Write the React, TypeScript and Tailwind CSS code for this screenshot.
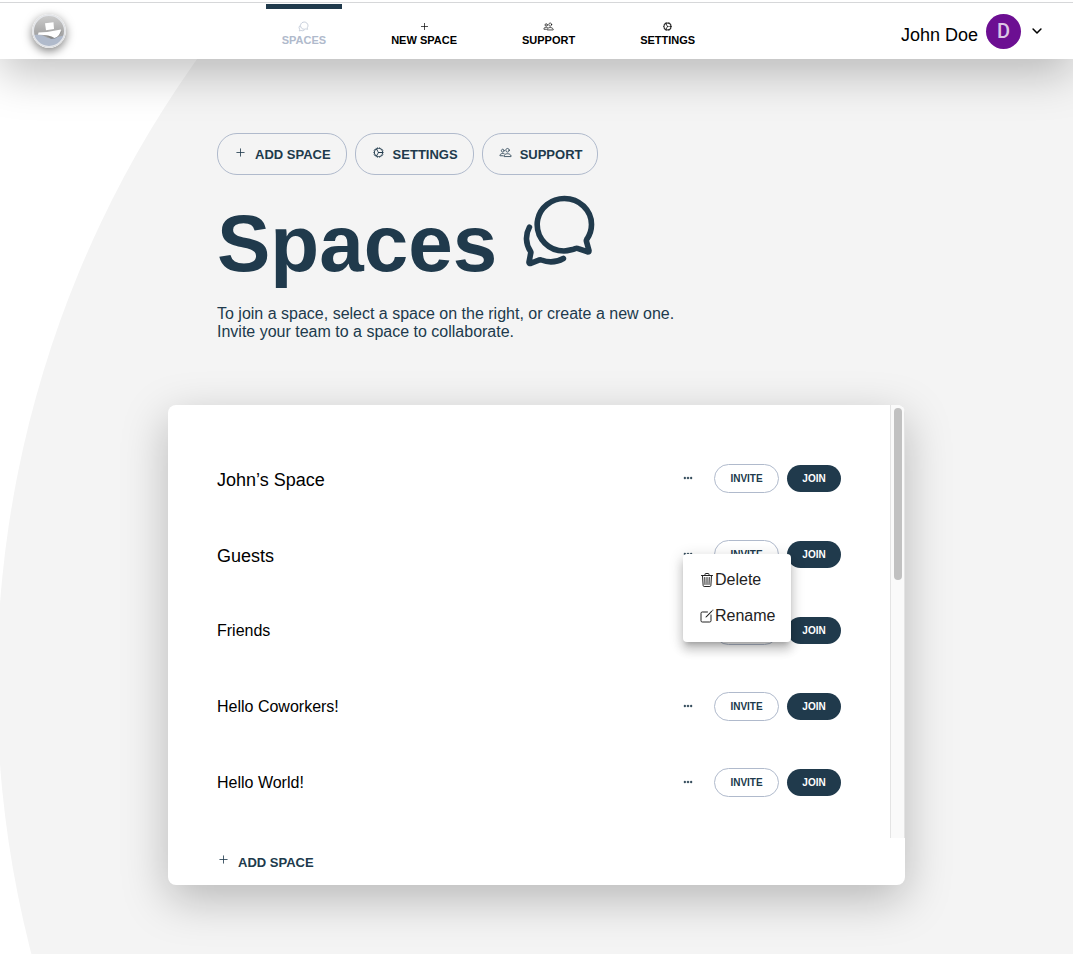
import type { ReactNode } from 'react';
import type { IconType } from 'react-icons';
import {
  IoAddOutline,
  IoChatbubblesOutline,
  IoChevronDownOutline,
  IoCogOutline,
  IoCreateOutline,
  IoEllipsisHorizontal,
  IoPeopleOutline,
  IoTrashOutline,
} from 'react-icons/io5';

const tabs: { label: string; icon: IconType; active?: boolean }[] = [
  { label: 'SPACES', icon: IoChatbubblesOutline, active: true },
  { label: 'NEW SPACE', icon: IoAddOutline },
  { label: 'SUPPORT', icon: IoPeopleOutline },
  { label: 'SETTINGS', icon: IoCogOutline },
];

const spaces: { name: string; large?: boolean; menuOpen?: boolean }[] = [
  { name: 'John’s Space', large: true },
  { name: 'Guests', large: true, menuOpen: true },
  { name: 'Friends' },
  { name: 'Hello Coworkers!' },
  { name: 'Hello World!' },
];

function Logo() {
  return (
    <a href="#home" aria-label="Home" className="block w-11">
      <svg
        viewBox="0 0 34 34"
        className="h-[34px] w-[34px] rounded-full shadow-[0_3px_10px_rgba(0,0,0,0.5)]"
        aria-hidden="true"
      >
        <defs>
          <linearGradient id="sky" x1="0" y1="0" x2="0" y2="1">
            <stop offset="0" stopColor="#d0d0d0" />
            <stop offset="0.6" stopColor="#a4a4a4" />
          </linearGradient>
          <clipPath id="disc">
            <circle cx="17" cy="17" r="16" />
          </clipPath>
        </defs>
        <circle cx="17" cy="17" r="17" fill="#e4e4e4" />
        <g clipPath="url(#disc)">
          <rect width="34" height="34" fill="url(#sky)" />
          <path d="M0 21.5Q6 19.5 11 21.5Q17 25.5 22 24Q28 22 34 21V34H0z" fill="#b0bacb" />
          <path d="M7 20.5Q13 20 19 25Q25 26 29.5 18V17L20 19z" fill="#666" opacity="0.45" />
        </g>
        <circle cx="17" cy="17" r="15.7" fill="none" stroke="#e4e6ea" strokeWidth="1.4" />
        <path d="M13 9.2L21.5 8.2L22 15L14 16.2z" fill="#fff" />
        <path d="M6.5 18.6Q17 18 29 15.4Q28.5 21.5 22.5 24Q17 20.5 6 20.7z" fill="#fff" />
      </svg>
    </a>
  );
}

function Header() {
  return (
    <header className="relative z-10 bg-white pt-[2px] shadow-[0_14px_46px_rgba(0,0,0,0.25)]">
      <div className="flex h-[57px] items-center justify-between border-t border-[#d6d7d9] pr-[29px] pl-8">
        <Logo />
        <nav className="flex gap-[33px] self-stretch pt-px">
          {tabs.map(({ label, icon: Icon, active }) => (
            <a
              key={label}
              href="#tab"
              aria-current={active ? 'page' : undefined}
              className={`flex flex-col items-center gap-[2px] border-t-[5px] px-4 pt-3 text-[11px] leading-3 font-bold ${
                active ? 'border-[#203a4c] text-[#b0bacc]' : 'border-transparent text-black'
              }`}
            >
              <Icon className="h-[11px] w-[11px]" />
              {label}
            </a>
          ))}
        </nav>
        <button type="button" className="flex items-center">
          <span className="pt-[7px] text-[18px] leading-5 text-black">John Doe</span>
          <span className="ml-2 flex h-[35px] w-[35px] items-center justify-center rounded-full bg-[#6c0f92] font-['Roboto',sans-serif] text-[20px] font-medium text-[#dcc6e6]">
            D
          </span>
          <IoChevronDownOutline className="ml-[9px] h-[14px] w-[14px] text-black [&_path]:stroke-[56px]" />
        </button>
      </div>
    </header>
  );
}

function PillButton({ icon: Icon, children }: { icon: IconType; children: ReactNode }) {
  return (
    <button
      type="button"
      className="flex h-[42px] items-center gap-2 rounded-[20px] border border-[#b0bacc] pt-[2px] pr-[15px] pl-4 text-[13px] font-bold"
    >
      <Icon className="mb-[6px] h-[13px] w-[13px]" />
      {children}
    </button>
  );
}

function SpaceMenu() {
  return (
    <ul
      role="menu"
      className="absolute top-1/2 left-0 z-10 rounded bg-white py-2 text-[16px] text-[#222] shadow-[0_5px_5px_-3px_rgba(0,0,0,0.2),0_8px_10px_1px_rgba(0,0,0,0.14),0_3px_14px_2px_rgba(0,0,0,0.12)]"
    >
      <li role="none">
        <button type="button" role="menuitem" className="flex h-9 w-full items-center px-4">
          <IoTrashOutline className="h-4 w-4" />
          Delete
        </button>
      </li>
      <li role="none">
        <button type="button" role="menuitem" className="flex h-9 w-full items-center px-4">
          <IoCreateOutline className="h-4 w-4" />
          Rename
        </button>
      </li>
    </ul>
  );
}

function SpaceRow({ name, large, menuOpen }: { name: string; large?: boolean; menuOpen?: boolean }) {
  return (
    <li className="flex h-[76px] items-center">
      <span className={`flex-1 text-black ${large ? 'pt-1 text-[18px]' : 'pt-px text-[16px]'}`}>{name}</span>
      <div className="relative mr-[21px]">
        <button type="button" aria-label={`Options for ${name}`} className="block">
          <IoEllipsisHorizontal className="h-[10px] w-[10px] stroke-current stroke-[24px]" />
        </button>
        {menuOpen && <SpaceMenu />}
      </div>
      <button
        type="button"
        className="mr-2 h-[29px] w-[65px] rounded-[15px] border border-[#b0bacc] bg-white text-[10px] font-bold"
      >
        INVITE
      </button>
      <button type="button" className="h-[27px] w-[54px] rounded-[14px] bg-[#203a4c] text-[10px] font-bold text-white">
        JOIN
      </button>
    </li>
  );
}

export default function App() {
  return (
    <div className="relative min-h-screen overflow-hidden bg-white font-['Liberation_Sans',Arial,sans-serif] text-[#203a4c]">
      <div className="absolute top-[-392px] left-[-3px] h-[2152px] w-[2152px] rounded-full bg-[#f4f4f4]" />
      <Header />
      <main className="relative mx-auto w-full max-w-[737px] pt-[74px] pb-[69px]">
        <section className="px-[49px]">
          <div className="flex gap-2">
            <PillButton icon={IoAddOutline}>ADD SPACE</PillButton>
            <PillButton icon={IoCogOutline}>SETTINGS</PillButton>
            <PillButton icon={IoPeopleOutline}>SUPPORT</PillButton>
          </div>
          <div className="mt-4 flex gap-[22px]">
            <h1 className="text-[80px] leading-[106px] font-bold">Spaces</h1>
            <IoChatbubblesOutline className="h-20 w-20 [&_path]:stroke-[36px]" />
          </div>
          <p className="mt-2 text-[16px] leading-[18px]">
            To join a space, select a space on the right, or create a new one.
            <br />
            Invite your team to a space to collaborate.
          </p>
        </section>
        <section className="mt-16 overflow-clip rounded-lg bg-white shadow-[0_14px_46px_rgba(0,0,0,0.25)]">
          <div className="flex">
            <ul className="flex-1 pt-[35px] pr-[49px] pb-[18px] pl-[49px]">
              {spaces.map((space) => (
                <SpaceRow key={space.name} {...space} />
              ))}
            </ul>
            <div className="w-[15px] border-x border-[#e4e4e4] bg-[#fafafa] px-[3px] pt-[3px]">
              <div className="h-[172px] w-2 rounded-full bg-[#c1c1c1]" />
            </div>
          </div>
          <div className="flex h-[47px] items-center px-[49px] pt-[2px]">
            <button type="button" className="flex items-center gap-2 text-[13px] font-bold">
              <IoAddOutline className="mb-[6px] h-[13px] w-[13px]" />
              ADD SPACE
            </button>
          </div>
        </section>
      </main>
    </div>
  );
}
